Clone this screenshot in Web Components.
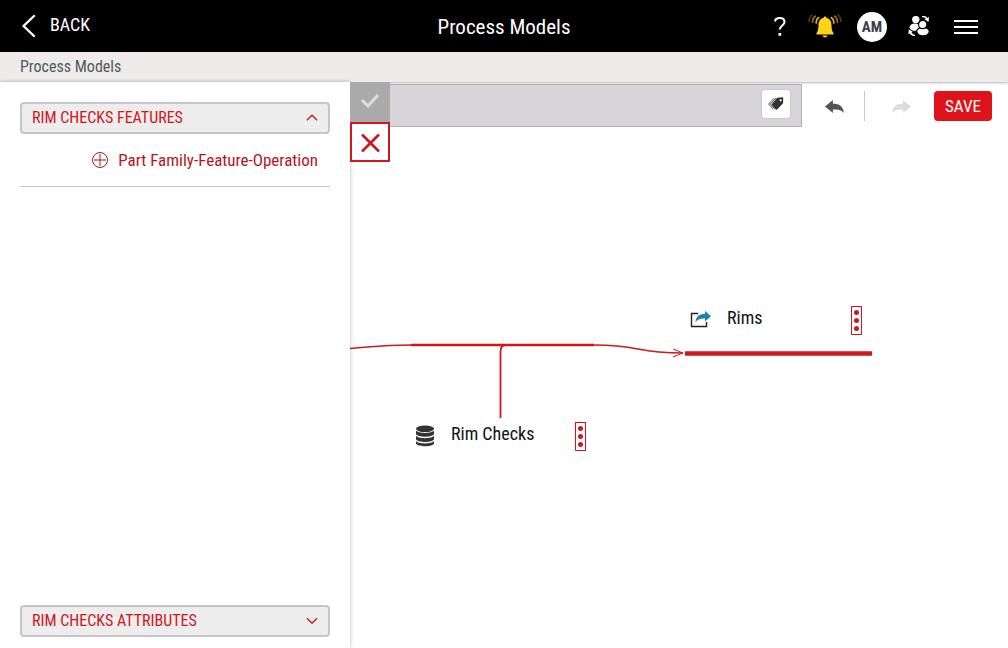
<!DOCTYPE html>
<html lang="en">
<head>
<meta charset="utf-8">
<meta name="viewport" content="width=device-width, initial-scale=1">
<title>Process Models</title>
<style>
  html, body { height: 100%; }
  body {
    margin: 0;
    background: #fff;
    color: #111;
    font: 16px/20px "Roboto Condensed", "Liberation Sans Narrow", Roboto, sans-serif;
    --red: #cf171e;
    --red-bright: #df141a;
  }
</style>
</head>
<body>
<process-app></process-app>

<script>
// Shared base: every element only has to give its markup
class BaseElement extends HTMLElement {
    connectedCallback() {
        if (this.shadowRoot) return;
        this.attachShadow({ mode: 'open' });
        this.shadowRoot.innerHTML = `
      <style>
        * { box-sizing: border-box; }
        button { font: inherit; color: inherit; background: none; border: 0; padding: 0; margin: 0; cursor: pointer; }
        a { color: inherit; text-decoration: none; }
        svg { display: block; }
      </style>
      ${this.template()}`;
    }
}

/**
 * <app-header> Black bar: back link, title, user actions
 */
class AppHeader extends BaseElement {
    template() {
        return `
      <style>
        :host { display: block; background: #000; color: #fff; }
        header {
          display: grid;
          grid-template-columns: 1fr auto 1fr;
          align-items: center;
          height: 52px;
          padding: 0 22px;
        }
        .back { display: flex; align-items: center; gap: 14px; justify-self: start; padding-bottom: 2px; font-size: 18px; }
        .back svg { margin-top: 2px; }
        h1 { margin: 0; font-size: 21px; font-weight: 400; line-height: 24px; padding-top: 2px; }
        nav { display: flex; align-items: center; justify-self: end; padding-right: 8px; }
        nav button { display: flex; align-items: center; justify-content: center; }
        .help { width: 20px; margin-right: 17px; }
        .bell { margin-right: 14px; }
        .avatar {
          width: 30px;
          height: 30px;
          margin: 2px 20px 0 0;
          border-radius: 50%;
          background: #fff;
          color: #3a3f45;
          font-size: 15px;
          font-weight: 700;
        }
        .team { margin: 0 23px 0 0; }
      </style>
      <header>
        <a class="back" href="#back">
          <svg width="14" height="24" viewBox="1 0 14 24" fill="none" stroke="#fff" stroke-width="2.4" stroke-linecap="round" stroke-linejoin="round"><path d="M13 2 2.500 12 13 22"/></svg>
          <span>BACK</span>
        </a>
        <h1><slot></slot></h1>
        <nav>
          <button class="help" aria-label="Help">
            <svg width="16" height="22" viewBox="0 0 16 22" fill="none" stroke="#fff" stroke-width="2"><path d="M3 6.500C3.200 4.200 5 3 7.800 3c2.800 0 4.700 1.500 4.700 3.900 0 3.600-4.700 3.600-4.700 7.700"/><path d="M6.500 18h2.700v2.800H6.500z" fill="#fff" stroke="none"/></svg>
          </button>
          <button class="bell" aria-label="Notifications">
            <svg width="36" height="26" viewBox="0 0 36 26">
              <path d="M18 3.500c1 0 1.500.6 1.500 1.500 3.500.7 5 3.500 5 7 0 4.500.8 6.500 2 8v1.500h-17V20c1.200-1.500 2-3.500 2-8 0-3.500 1.500-6.300 5-7 0-.9.500-1.500 1.500-1.500zM15.500 22.500h5c-.4 1.300-1.200 2-2.500 2s-2.100-.7-2.500-2z" fill="#ffd21c"/>
              <g fill="none" stroke="#d9ae18" stroke-width="1.700">
                <path d="M12.200 4.200c-2.200 1.200-3.200 3.400-3 6.500M23.800 4.200c2.200 1.200 3.200 3.400 3 6.500"/>
                <path d="M8.800 2.800C6.300 4.400 5.300 6.800 5.600 10M27.200 2.800c2.500 1.600 3.500 4 3.200 7.200" opacity=".65"/>
                <path d="M5.500 1.600C3 3.200 1.800 5.900 2.100 9.200M30.500 1.600c2.500 1.600 3.700 4.300 3.400 7.600" opacity=".35"/>
              </g>
            </svg>
          </button>
          <button class="avatar" aria-label="Account AM">AM</button>
          <button class="team" aria-label="Switch team">
            <svg width="24" height="24" viewBox="0 0 24 24" fill="#fff">
              <circle cx="8.800" cy="5.600" r="3.700"/>
              <ellipse cx="7.800" cy="13.200" rx="5.200" ry="3.700"/>
              <g stroke="#000" stroke-width="1.200">
                <ellipse cx="16" cy="17.600" rx="6.300" ry="4.300"/>
                <circle cx="15.700" cy="10.500" r="4.200"/>
              </g>
              <path d="M15 2.200c2.500-.5 4.200.1 5.200 1.700l1.800-1-.4 5-4-2.500 1.300-.7c-.8-1-2-1.400-3.900-1.400zM1.800 15.200l4 2.500-1.300.8c.7 1.200 1.800 1.900 3.500 2.200v1.400c-2.600-.1-4.400-1-5.400-2.600l-1.200.7z"/>
            </svg>
          </button>
          <button aria-label="Menu">
            <svg width="24" height="18" viewBox="0 0 24 18" fill="none" stroke="#fff" stroke-width="2"><path d="M0 4h24M0 10h24M0 16h24"/></svg>
          </button>
        </nav>
      </header>`;
    }
}

/**
 * <section-toggle> Accordion header, [open] turns the chevron up
 */
class SectionToggle extends BaseElement {
    template() {
        const open = this.hasAttribute('open');
        const chevron = open ? 'M1 6.500l5.500-5.500 5.500 5.500' : 'M1 1l5.500 5.500L12 1';
        return `
      <style>
        :host { display: block; }
        button {
          display: flex;
          align-items: center;
          justify-content: space-between;
          width: 100%;
          height: 32px;
          padding: 0 10px;
          border: 2px solid #c6c6c6;
          border-radius: 4px;
          background: #ededed;
          color: var(--red);
          text-align: left;
        }
      </style>
      <button aria-expanded="${open}">
        <span><slot></slot></span>
        <svg width="12" height="8" viewBox="0 0 13 8" fill="none" stroke="var(--red)" stroke-width="1.400"><path d="${chevron}"/></svg>
      </button>`;
    }
}

/**
 * <feature-panel> Left column
 */
class FeaturePanel extends BaseElement {
    template() {
        return `
      <style>
        :host {
          display: flex;
          flex-direction: column;
          justify-content: space-between;
          flex: none;
          width: 350px;
          box-sizing: border-box;
          padding: 20px 20px 11px;
          background: #fff;
          box-shadow: 0 0 4px rgba(0, 0, 0, .3);
          z-index: 1;
        }
        .items { padding: 16px 12px; border-bottom: 1px solid #c6c6c6; }
        .add { display: flex; align-items: center; gap: 10px; margin-left: auto; color: #b5161c; font-size: 17px; }
      </style>
      <div>
        <section-toggle open>RIM CHECKS FEATURES</section-toggle>
        <div class="items">
          <button class="add">
            <svg width="16" height="16" viewBox="0 0 16 16" fill="none" stroke="currentColor"><circle cx="8" cy="8" r="7.500"/><path d="M8 2v12M2 8h12"/></svg>
            <span>Part Family-Feature-Operation</span>
          </button>
        </div>
      </div>
      <section-toggle>RIM CHECKS ATTRIBUTES</section-toggle>`;
    }
}

/**
 * <model-toolbar> Edit strip, undo / redo and save
 */
class ModelToolbar extends BaseElement {
    template() {
        return `
      <style>
        :host { display: flex; align-items: center; position: relative; padding: 2px 16px 0 0; }
        .strip {
          display: flex;
          align-items: center;
          justify-content: flex-end;
          flex: 1;
          height: 43px;
          padding: 0 10px;
          border: 1px solid #b3b1b4;
          background: #d7d5d9;
        }
        .tag {
          display: flex;
          align-items: center;
          justify-content: center;
          width: 30px;
          height: 30px;
          margin-bottom: 3px;
          border: 1px solid #c9c9cb;
          border-radius: 4px;
          background: #fff;
        }
        /* Accept / cancel sit over the start of the strip and the canvas */
        .confirm { position: absolute; top: 0; left: 0; }
        .confirm button { display: flex; align-items: center; justify-content: center; width: 40px; height: 40px; }
        .accept { background: #aaa; }
        .cancel { border: 2px solid var(--red); background: #fff; }
        .actions { display: flex; align-items: center; }
        .undo { margin: 0 20px 0 23px; }
        .redo { margin: 0 23px 0 27px; }
        .divider { width: 1px; height: 30px; background: #c6c6c6; }
        .save {
          width: 58px;
          height: 30px;
          border-radius: 4px;
          background: var(--red-bright);
          color: #fff;
          font-size: 17px;
        }
      </style>
      <div class="strip">
        <button class="tag" aria-label="Tags">
          <svg width="18" height="16" viewBox="0 0 18 16">
            <path d="M10.500 2.500 15.500 2 15.300 7 9.500 13 5.500 8.500z" fill="#333" stroke="#333" stroke-width="1.500" stroke-linejoin="round"/>
            <circle cx="13.600" cy="4.300" r="1.100" fill="#fff"/>
            <path d="M9 2 3.500 8l4.500 5.300M7 2.300 1.600 8l4.400 5" fill="none" stroke="#444" stroke-width=".9"/>
          </svg>
        </button>
      </div>
      <div class="actions">
        <button class="undo" aria-label="Undo">
          <svg width="19" height="14" viewBox="0 0 18 14" preserveAspectRatio="none" fill="#555"><path d="M0 7.500 7.500 1v3.800C13.500 4.800 17 7 18 14 15.500 11 13 10.500 7.500 10.500V14z"/></svg>
        </button>
        <div class="divider"></div>
        <button class="redo" aria-label="Redo" disabled>
          <svg width="19" height="14" viewBox="0 0 18 14" preserveAspectRatio="none" fill="#dcdcdc"><path d="M18 7.500 10.500 1v3.800C4.500 4.800 1 7 0 14c2.500-3 5-3.500 10.500-3.500V14z"/></svg>
        </button>
        <button class="save">SAVE</button>
      </div>
      <div class="confirm">
        <button class="accept" aria-label="Accept" disabled>
          <svg width="20" height="18" viewBox="0 0 20 18" fill="none" stroke="#dedede" stroke-width="3"><path d="M2 7l6 6L18 2"/></svg>
        </button>
        <button class="cancel" aria-label="Cancel">
          <svg width="20" height="20" viewBox="0 0 20 20" fill="none" stroke="var(--red)" stroke-width="2.600"><path d="M2 2.500l17 17M19 2.500l-17 17"/></svg>
        </button>
      </div>`;
    }
}

/**
 * <model-node> Node label with its icon (slot) and a menu button
 */
class ModelNode extends BaseElement {
    template() {
        return `
      <style>
        :host { display: flex; align-items: center; font-size: 18px; line-height: 24px; }
        .label { flex: 1; padding-bottom: 5px; }
        ::slotted(svg) { display: block; margin: 0 16px 2px 0; }
        .menu {
          display: flex;
          flex-direction: column;
          align-items: center;
          justify-content: center;
          gap: 3px;
          width: 11px;
          height: 29px;
          border: 1px solid var(--red);
        }
        .menu i { width: 5px; height: 5px; border-radius: 50%; background: var(--red); }
      </style>
      <slot name="icon"></slot>
      <span class="label"><slot></slot></span>
      <button class="menu" aria-label="Node menu"><i></i><i></i><i></i></button>`;
    }
}

/**
 * <model-canvas> Free canvas: edges in one svg, nodes on top
 */
class ModelCanvas extends BaseElement {
    template() {
        return `
      <style>
        :host { display: block; position: relative; overflow: hidden; }
        .edges { position: absolute; top: 0; left: 0; overflow: visible; }
        model-node { position: absolute; }
        .rims { left: 340px; top: 179px; width: 172px; }
        .checks { left: 65px; top: 295px; width: 171px; }
      </style>
      <svg class="edges" width="530" height="320" viewBox="0 0 530 320" fill="none" stroke="var(--red)" aria-hidden="true">
        <path d="M0 221.500C22 220 30 218 62 218M243 218c51 0 39 8 90 8" stroke-width="1.500"/>
        <path d="M61 218h183" stroke-width="2.400"/>
        <path d="M150.500 291v-66c0-4 1-7 5-7" stroke-width="1.800"/>
        <path d="M323 222l10 4-10 4"/>
        <path d="M335 226.500h187" stroke-width="4.500"/>
      </svg>
      <model-node class="rims">
        <svg slot="icon" width="21" height="18" viewBox="0 0 21 18">
          <path d="M8 2.500H1.500v13h15V11" fill="none" stroke="#222" stroke-width="1.400"/>
          <path d="M5.500 11C6 5.500 9 3 15 3V0l6 5.300-6 5.200V7.500c-4.500 0-6.500.5-9.500 3.500z" fill="#1b82b0"/>
        </svg>
        Rims
      </model-node>
      <model-node class="checks">
        <svg slot="icon" width="20" height="22" viewBox="0 0 20 22">
          <ellipse cx="10" cy="3.800" rx="9" ry="3.300" fill="#333"/>
          <path d="M1 5.500c2 3.200 16 3.200 18 0V9c-2 3.700-16 3.700-18 0zM1 10.800c2 3.200 16 3.200 18 0v3.400c-2 3.700-16 3.700-18 0zM1 16c2 3.200 16 3.200 18 0v2.500c-2 3.700-16 3.700-18 0z" fill="#333"/>
        </svg>
        Rim Checks
      </model-node>`;
    }
}

class ProcessApp extends BaseElement {
    template() {
        return `
      <style>
        :host { display: flex; flex-direction: column; min-height: 100%; }
        .crumbs { height: 30px; padding: 5px 20px; background: #efebea; color: #4e5a62; box-shadow: 0 1px 2px rgba(0, 0, 0, .3); }
        main { display: flex; flex: 1; }
        .work { display: flex; flex-direction: column; flex: 1; min-width: 0; }
        model-toolbar { z-index: 1; }
        model-canvas { flex: 1; }
      </style>
      <app-header>Process Models</app-header>
      <nav class="crumbs" aria-label="Breadcrumb"><a href="#models">Process Models</a></nav>
      <main>
        <feature-panel></feature-panel>
        <div class="work">
          <model-toolbar></model-toolbar>
          <model-canvas></model-canvas>
        </div>
      </main>`;
    }
}

customElements.define('app-header', AppHeader);
customElements.define('section-toggle', SectionToggle);
customElements.define('feature-panel', FeaturePanel);
customElements.define('model-toolbar', ModelToolbar);
customElements.define('model-node', ModelNode);
customElements.define('model-canvas', ModelCanvas);
customElements.define('process-app', ProcessApp);
</script>
</body>
</html>
